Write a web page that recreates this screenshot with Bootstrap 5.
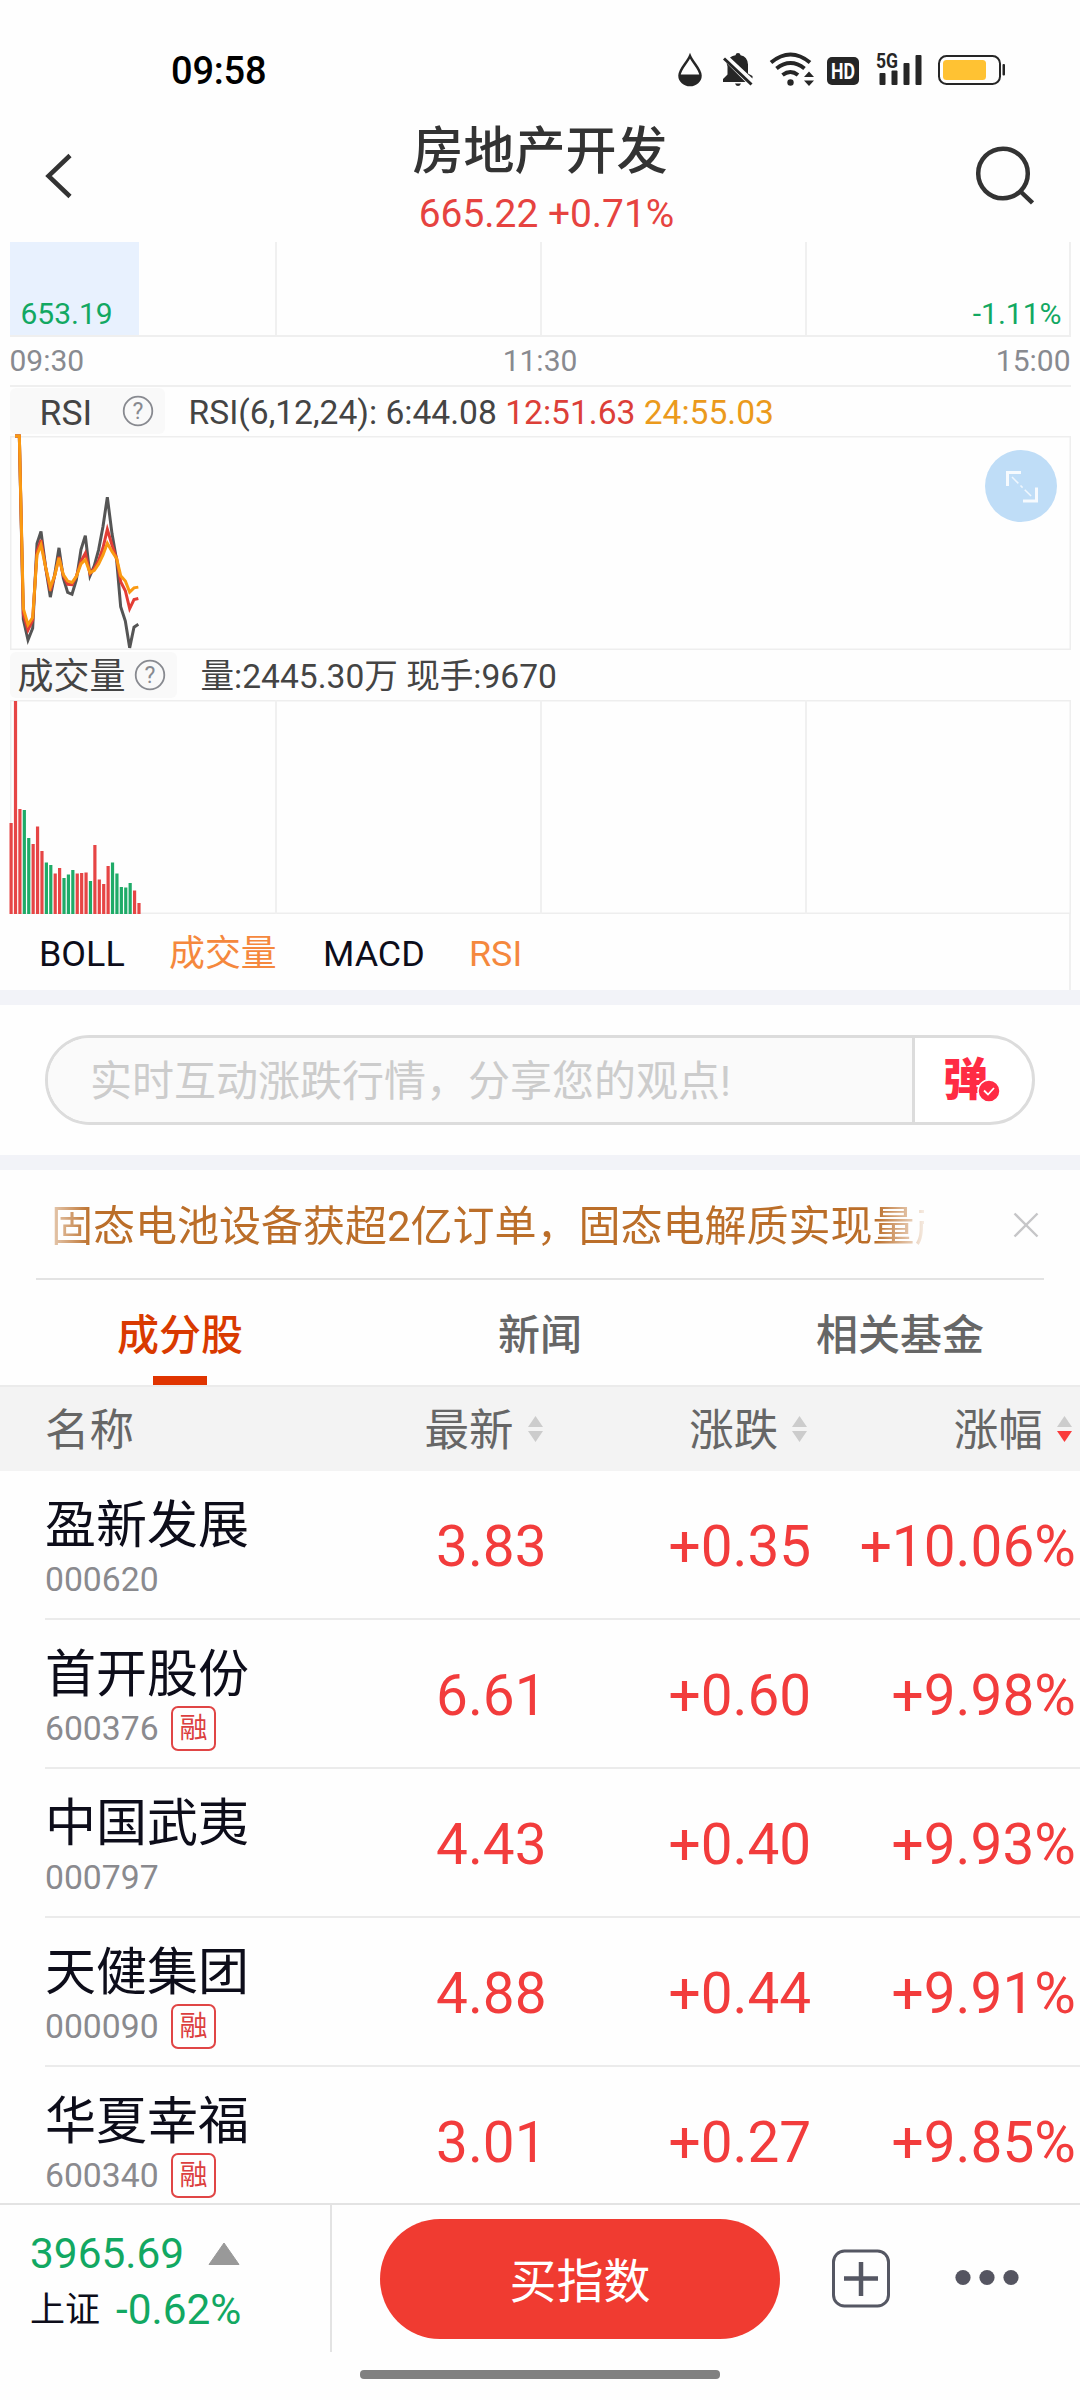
<!DOCTYPE html>
<html lang="zh-CN">
<head>
<meta charset="utf-8">
<meta name="viewport" content="width=device-width, initial-scale=1">
<title>房地产开发</title>
<link href="https://cdn.jsdelivr.net/npm/bootstrap@5.3.0/dist/css/bootstrap.min.css" rel="stylesheet">
<style>
  body { font-family: Roboto, "Noto Sans CJK SC", sans-serif; line-height: 1; color: #0d0d1a; background: #fefefe; }
  .phone { width: 1080px; height: 2400px; white-space: nowrap; }
  svg { display: block; flex: none; }
  .c-up { color: #f23c3c; }
  .c-down { color: #12a862; }
  .statusbar { height: 110px; padding: 2px 74px 0 171px; }
  .clock { font-size: 38px; font-weight: 500; color: #000; letter-spacing: -.2px; padding-top: 22px; }
  .status-icons { padding-top: 50px; height: 90px; }
  .appbar { height: 132px; padding: 0 46px 0 45px; }
  .appbar h1 { font-size: 51px; font-weight: 500; line-height: 60px; margin: 12px 0 0 1px; color: #333; }
  .quote-sub { font-size: 38.9px; line-height: 46px; color: #e64340; padding: 9px 0 0 14px; }
  .chart-pad { padding: 0 9.5px; }
  .minute { height: 95px; border-bottom: 2px solid #efefef; box-shadow: inset 1px 0 #ececec, inset -2px 0 #efefef; }
  .quarter { width: 25%; flex: none; }
  .quarter + .quarter { border-left: 2px solid #f0f0f0; }
  .minute-fill { width: 129px; background: #e8f1fe; padding-left: 11px; }
  .price-tag { font-size: 30px; line-height: 36px; padding-bottom: 3px; }
  .time-axis { height: 48px; padding-top: 7px; font-size: 30px; line-height: 34px; color: #888a90; }
  .ind-head { height: 51px; border-top: 2px solid #efefef; color: #444; }
  .vol-head { height: 50px; color: #444; }
  .ind-chip { background: #f9f9f9; border-radius: 6px; height: 46px; margin-top: 1px; font-size: 35.5px; }
  .ind-values { font-size: 33.6px; }
  .c-red { color: #dc3f38; } .c-gold { color: #eb9a1c; } .c-org { color: #f5883d; }
  .plot { height: 214px; box-shadow: inset 0 0 0 1.5px #eee; }
  .plot > .rsi-lines { margin-left: -9.5px; overflow: visible; }
  .plot > .vol-bars { left: -9.5px; }
  .expand { position: absolute; right: 14px; top: 14px; }
  .ind-tabs { height: 76px; margin-right: 9.5px; padding: 5px 0 0 39px; font-size: 35.9px; border-right: 2px solid #f0f0f0; }
  .band { height: 15px; background: #f2f3f8; }
  .comment-area { height: 150px; padding: 30px 45px; }
  .comment-box { height: 90px; border: 3px solid #dcdcdc; border-radius: 45px; overflow: hidden; }
  .comment-text { width: 867px; background: #fafafa; border-right: 3px solid #dcdcdc; color: #ccc; font-size: 42px; padding: 4px 0 0 42px; }
  .danmu { font-size: 45px; font-weight: 900; color: #ff2b44; padding-left: 28px; position: relative; }
  .danmu svg { position: absolute; left: 61px; top: 40px; }
  .ticker { height: 110px; margin: 0 36px; border-bottom: 2px solid #e3e3e3; padding: 0 5px 2px 15px; }
  .ticker-text { width: 873px; overflow: hidden; font-size: 42px; line-height: 56px; color: #bb6e29; margin-top: 8px;
    -webkit-mask-image: linear-gradient(90deg, rgba(0,0,0,.35), #000 40px, #000 825px, transparent 880px); }
  .main-tabs { height: 105px; font-size: 42px; font-weight: 500; color: #666; }
  .main-tabs > div { flex: 1 1 0; padding-top: 35px; }
  .main-tabs .current { color: #d93a00; }
  .main-tabs .current::after { content: ""; width: 54px; height: 9px; background: #e03400; margin-top: auto; }
  .cell-name { width: 284px; padding-left: 45px; flex: none; }
  .cell-num { width: 264.6px; flex: none; text-align: right; }
  .thead-bar { height: 86px; background: #f3f3f3; border-top: 2px solid #ebebeb; font-size: 44.5px; color: #666; }
  .thead-bar .lbl { padding-top: 4px; }
  .stocks { height: 732px; overflow: hidden; }
  .stock { height: 149px; }
  .stock::after { content: ""; height: 2px; background: #ebebeb; margin-left: 45px; }
  .stock-name { font-size: 51px; line-height: 60px; padding-top: 25px; }
  .stock-code { font-size: 33.7px; color: #8a8a8e; height: 45px; margin-top: 1px; }
  .rong { width: 45px; height: 45px; border: 2px solid #e04545; border-radius: 7px; color: #dc3f3f; font-size: 28px; margin-left: 12.5px; }
  .stock .cell-num { font-size: 56.7px; padding: 6px 2px 0 0; }
  .bottombar { height: 149px; border-top: 2px solid #e3e3e3; }
  .index-box { width: 332px; border-right: 2px solid #e3e3e3; padding: 22px 0 0 30px; font-size: 42.4px; }
  .index-box > div { line-height: 54px; }
  .buy { width: 400px; height: 120px; border-radius: 60px; background: #f03b31; color: #fff; font-size: 47px; margin: 14px 0 0 48px; padding: 5px 0 0; border: 0; line-height: 1; }
  .buy:hover { background: #f03b31; color: #fff; }
  .homebar { width: 360px; height: 9px; border-radius: 4px; background: #808080; margin-top: 18px; }
</style>
</head>
<body class="overflow-hidden">
<div class="phone d-flex flex-column overflow-hidden">

  <div class="statusbar d-flex justify-content-between">
    <div class="clock"><div class="pt-4 mt-1">09:58</div></div>
    <div class="status-icons">
      <svg width="330" height="36" viewBox="675 51 330 36" fill="#262626">
        <path d="M689 55C686 62 678.500 68 678.500 74.500a10.500 9.500 0 0 0 21 0C699.500 68 692 62 689 55z" fill="#fff" stroke="#262626" stroke-width="2.500"/>
        <path d="M678 73.500h22a11 11 0 0 1-22 0z"/>
        <path d="M729 56.500q2.500-2 5.500-2.300q.3-2.200 2.500-2.200t2.600 2.200q7 1.400 7.400 9.300v9l4.500 2.500v2.500zM725.500 62l19 19H722v-3l4.500-4.500v-8zM734 82.500h6q-1 2.500-3 2.500t-3-2.500z"/>
        <path d="M723 57.500l27.500 26" stroke="#262626" stroke-width="3"/>
        <g fill="none" stroke="#262626" stroke-width="4"><path d="M770 61.500q19.500-16 39 0M775.500 67.500q14-11 28 0M781.500 74q8-6 15.500 0"/></g>
        <circle cx="789.500" cy="81.500" r="3.200"/>
        <path d="M803 76l5-5.500l5 5.500zM803 79.500l5 5.500l5-5.500z"/>
        <rect x="826" y="56" width="32" height="28" rx="5"/>
        <text x="842" y="78" font-family="Roboto" font-weight="700" font-size="22.500" textLength="24" lengthAdjust="spacingAndGlyphs" text-anchor="middle" fill="#fff">HD</text>
        <text x="875" y="67" font-family="Roboto" font-weight="700" font-size="20" textLength="22" lengthAdjust="spacingAndGlyphs">5G</text>
        <rect x="878.500" y="72" width="6" height="12" rx="1"/><rect x="890.500" y="69.500" width="6" height="14.500" rx="1"/><rect x="902.500" y="62" width="6" height="22" rx="1"/><rect x="914.500" y="54" width="6" height="30" rx="1"/>
        <rect x="938" y="55" width="61" height="28" rx="7.500" fill="none" stroke="#262626" stroke-width="2"/>
        <rect x="942" y="59" width="43" height="20" rx="3.500" fill="#ffc233"/>
        <rect x="1001.500" y="63" width="2.500" height="11.500" rx="1"/>
      </svg>
    </div>
  </div>

  <div class="appbar d-flex justify-content-between">
    <svg width="60" height="132" viewBox="45 110 60 132"><path d="M70 155.500L48.500 176l21.500 20.500" fill="none" stroke="#333" stroke-width="4.500"/></svg>
    <div class="text-center">
      <h1>房地产开发</h1>
      <div class="quote-sub">665.22 +0.71%</div>
    </div>
    <svg width="60" height="132" viewBox="974 110 60 132" fill="none" stroke="#333" stroke-width="4.500"><circle cx="1003" cy="173.500" r="24.800"/><path d="M1020 191l12.500 12"/></svg>
  </div>

  <div class="chart-pad">
    <div class="minute d-flex">
      <div class="quarter d-flex"><div class="minute-fill price-tag c-down d-flex align-items-end">653.19</div></div>
      <div class="quarter"></div><div class="quarter"></div>
      <div class="quarter price-tag c-down d-flex align-items-end justify-content-end" style="padding-right:9px">-1.11%</div>
    </div>
    <div class="time-axis d-flex justify-content-between"><span>09:30</span><span>11:30</span><span>15:00</span></div>
    <div class="ind-head d-flex">
      <div class="ind-chip d-flex align-items-center" style="width:155px"><span style="margin:5px 0 0 30px;width:82px">RSI</span>
        <svg width="32" height="32" viewBox="-16 -16 32 32"><circle r="14.300" fill="none" stroke="#888a90" stroke-width="1.800"/><text y="8" text-anchor="middle" font-size="23" fill="#888a90">?</text></svg>
      </div>
      <div class="ind-values d-flex align-items-center" style="margin-left:24px;padding-top:3px"><span>RSI(6,12,24): 6:44.08 <span class="c-red">12:51.63</span> <span class="c-gold">24:55.03</span></span></div>
    </div>
    <div class="plot position-relative">
      <svg class="rsi-lines" width="300" height="214" viewBox="0 436 300 214">
        <g transform="matrix(.33333 0 0 .35714 0 380)" fill="none" stroke-width="3">
          <polyline vector-effect="non-scaling-stroke" stroke="#555" points="45,157 58,157 70,670 84,728 98,695 111,458 123,424 137,525 151,608 164,545 177,470 190,555 203,595 216,600 229,560 243,475 256,436 270,548 283,520 296,475 309,410 322,328 336,430 350,505 362,635 376,675 389,750 402,692 415,684"/>
          <polyline vector-effect="non-scaling-stroke" stroke="#e23d35" points="45,157 58,157 70,655 84,700 98,672 111,480 123,448 137,525 151,590 164,548 177,495 190,548 203,572 216,573 229,550 243,508 256,485 270,542 283,528 296,505 309,470 322,418 336,462 350,500 362,565 376,590 389,640 402,615 415,612"/>
          <polyline vector-effect="non-scaling-stroke" stroke="#fa9a12" points="45,157 58,157 70,640 84,685 98,665 111,490 123,462 137,525 151,580 164,548 177,498 190,545 203,563 216,567 229,550 243,515 256,503 270,540 283,533 296,515 309,490 322,457 336,480 350,500 362,548 376,563 389,594 402,582 415,580"/>
        </g>
      </svg>
      <svg class="expand" width="72" height="72" viewBox="984 450 72 72"><circle cx="1020" cy="486" r="36" fill="#bfddf7"/><path d="M1006.500 486v-13.500H1020M1022 501h13.500v-13.500" fill="none" stroke="#fff" stroke-width="3" opacity=".85"/><path d="M1011 477l19.500 19.500" stroke="#fff" stroke-width="1.500" stroke-dasharray="9 3 3 3" opacity=".75"/></svg>
    </div>
    <div class="vol-head d-flex pt-1">
      <div class="ind-chip d-flex align-items-center" style="width:167px;margin-top:-2px"><span style="margin:4px 0 0 8px;width:116px;font-size:36px">成交量</span>
        <svg width="32" height="32" viewBox="-16 -16 32 32"><circle r="14.300" fill="none" stroke="#888a90" stroke-width="1.800"/><text y="8" text-anchor="middle" font-size="23" fill="#888a90">?</text></svg>
      </div>
      <div class="ind-values d-flex align-items-center" style="margin-left:24px">量:2445.30万 现手:9670</div>
    </div>
    <div class="plot d-flex position-relative">
      <div class="quarter"></div><div class="quarter"></div><div class="quarter"></div><div class="quarter"></div>
      <svg id="volume" class="vol-bars position-absolute top-0" width="300" height="214" viewBox="0 700 300 214"></svg>
    </div>
  </div>
  <div class="ind-tabs d-flex align-items-center"><span style="width:130px">BOLL</span><span class="c-org" style="width:154px">成交量</span><span style="width:146px">MACD</span><span class="c-org">RSI</span></div>

  <div class="band"></div>
  <div class="comment-area">
    <div class="comment-box d-flex bg-white">
      <div class="comment-text d-flex align-items-center">实时互动涨跌行情，分享您的观点!</div>
      <div class="danmu d-flex align-items-center">弹
        <svg width="26" height="26" viewBox="-13 -13 26 26"><circle r="11" fill="#ff2b44" stroke="#fff" stroke-width="1.500"/><path d="M-5-.5l4 4l6-6.500" fill="none" stroke="#fff" stroke-width="1.800"/></svg>
      </div>
    </div>
  </div>
  <div class="band"></div>

  <div class="ticker d-flex align-items-center justify-content-between">
    <div class="ticker-text">固态电池设备获超2亿订单，固态电解质实现量产</div>
    <svg class="mt-1" width="26" height="26" viewBox="0 0 26 26"><path d="M1.500 1.500l23 23M24.500 1.500l-23 23" stroke="#c6c6c8" stroke-width="2.400"/></svg>
  </div>
  <div class="main-tabs d-flex text-center">
    <div class="current d-flex flex-column align-items-center">成分股</div><div>新闻</div><div>相关基金</div>
  </div>
  <div class="thead-bar d-flex align-items-center">
    <div class="cell-name lbl">名称</div>
    <div class="cell-num d-flex justify-content-end align-items-center"><span class="lbl">最新</span><svg width="35" height="28" viewBox="-14 0 35 28"><path d="M0 12L7.500 1L15 12zM0 16h15l-7.500 11z" fill="#ccc"/></svg></div>
    <div class="cell-num d-flex justify-content-end align-items-center"><span class="lbl">涨跌</span><svg width="35" height="28" viewBox="-14 0 35 28"><path d="M0 12L7.500 1L15 12zM0 16h15l-7.500 11z" fill="#ccc"/></svg></div>
    <div class="cell-num d-flex justify-content-end align-items-center"><span class="lbl">涨幅</span><svg width="35" height="28" viewBox="-14 0 35 28"><path d="M0 12L7.500 1L15 12z" fill="#ccc"/><path d="M0 16h15l-7.500 11z" fill="#fa3c3c"/></svg></div>
  </div>
  <div class="stocks" id="stocks"></div>

  <div class="bottombar d-flex flex-shrink-0">
    <div class="index-box">
      <div class="c-down d-flex align-items-center">3965.69<svg class="ms-4" width="32" height="22" viewBox="0 0 32 22"><path d="M16 0l15 21.500H1z" fill="#999" stroke="#999" stroke-linejoin="round"/></svg></div>
      <div class="d-flex align-items-center"><span style="font-size:35px;width:86px;padding-top:3px">上证</span><span class="c-down">-0.62%</span></div>
    </div>
    <button class="btn buy">买指数</button>
    <svg width="190" height="60" viewBox="831 2249 190 60" style="margin:44px 0 0 51px"><rect x="833.500" y="2251" width="55" height="55" rx="11" fill="none" stroke="#555763" stroke-width="3"/><path d="M844 2278.500h34M861 2262v34" stroke="#555763" stroke-width="4.500"/><g fill="#555561"><circle cx="963" cy="2277.500" r="7.600"/><circle cx="987" cy="2277.500" r="7.600"/><circle cx="1011" cy="2277.500" r="7.600"/></g></svg>
  </div>
  <div class="homebar mx-auto flex-shrink-0"></div>
</div>

<script src="https://cdn.jsdelivr.net/npm/bootstrap@5.3.0/dist/js/bootstrap.bundle.min.js"></script>
<script>
  // Volume per minute: r = rise, g = fall, followed by the bar height in px
  const volume = 'r91 r213 r105 g104 g76 r70 r87.500 r63 g51.500 g49 r40.500 r46 g36 g39.500 g44 r40.500 r41 r41.500 g33 r69 r34.500 r30 r48 g51.500 g40.500 g27 g26.500 g31 r23.500 r11'.split(' ');
  document.getElementById('volume').innerHTML = volume.map((v, i) => {
    const h = parseFloat(v.slice(1)), x = (9.5 + i * 4.41).toFixed(2);
    return `<rect x="${x}" y="${914 - h}" width="3.200" height="${h}" fill="${v[0] === 'r' ? '#e64545' : '#1fab68'}"/>`;
  }).join('');

  const stocks = [
    ['盈新发展', '000620', 0, '3.83', '+0.35', '+10.06%'],
    ['首开股份', '600376', 1, '6.61', '+0.60', '+9.98%'],
    ['中国武夷', '000797', 0, '4.43', '+0.40', '+9.93%'],
    ['天健集团', '000090', 1, '4.88', '+0.44', '+9.91%'],
    ['华夏幸福', '600340', 1, '3.01', '+0.27', '+9.85%']
  ];
  document.getElementById('stocks').innerHTML = stocks.map(([name, code, margin, last, diff, pct]) => `
    <div class="stock d-flex flex-column">
      <div class="d-flex flex-grow-1">
        <div class="cell-name">
          <div class="stock-name">${name}</div>
          <div class="stock-code d-flex align-items-center">${code}${margin ? '<span class="rong d-flex align-items-center justify-content-center">融</span>' : ''}</div>
        </div>
        <div class="cell-num c-up d-flex align-items-center justify-content-end">${last}</div>
        <div class="cell-num c-up d-flex align-items-center justify-content-end">${diff}</div>
        <div class="cell-num c-up d-flex align-items-center justify-content-end">${pct}</div>
      </div>
    </div>`).join('');
</script>
</body>
</html>
